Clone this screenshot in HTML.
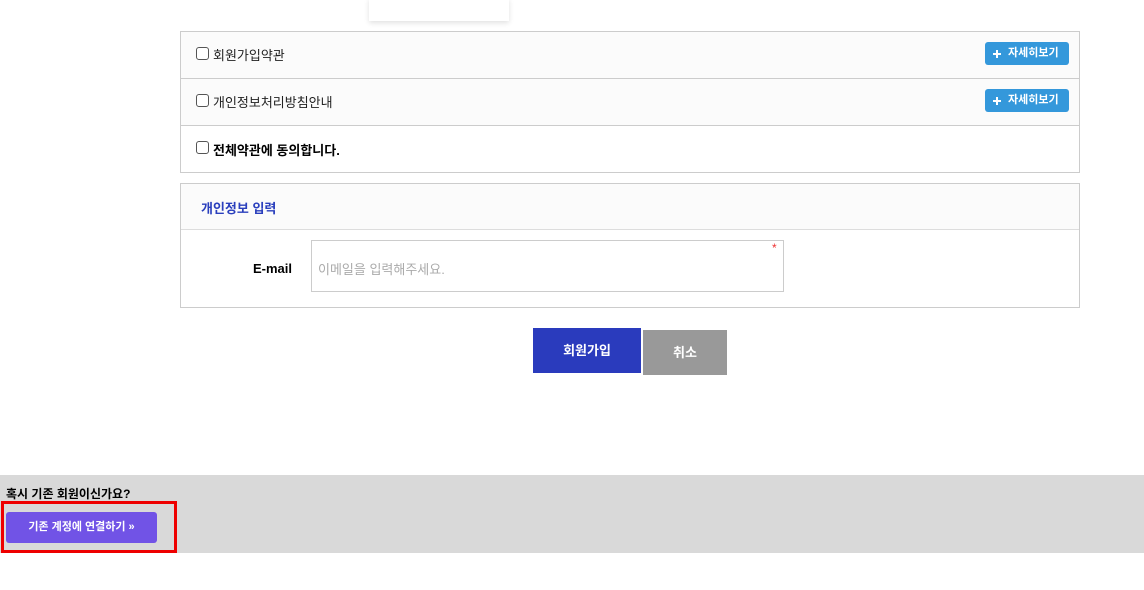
<!DOCTYPE html>
<html><head><meta charset="utf-8"><style>
*{box-sizing:border-box;margin:0;padding:0}
body{width:1144px;height:590px;background:#fff;font-family:"Liberation Sans","Noto Sans CJK KR",sans-serif;position:relative;overflow:hidden;color:#222}
.abs{position:absolute}
.cb{position:absolute;width:13px;height:13px;border:1px solid #555;border-radius:3px;background:#fff}
.btn{position:absolute;left:985px;width:84px;height:23px;background:#3498db;border-radius:3px;color:#fff;font-size:11px;font-weight:bold;line-height:22px;padding-left:23px}
.btn:before{content:"";position:absolute;left:8px;width:8px;height:2px;background:#fff;top:10.5px}
.btn:after{content:"";position:absolute;left:11px;top:7.5px;width:2px;height:8px;background:#fff}
</style></head><body>
<div class="abs" style="left:369px;top:-2px;width:140px;height:23px;background:#fff;box-shadow:0 2px 5px rgba(0,0,0,.12)"></div>
<div class="abs" style="left:180px;top:31px;width:900px;height:142px;border:1px solid #ccc">
 <div style="height:47px;background:#fbfbfb;border-bottom:1px solid #ccc"></div>
 <div style="height:47px;background:#fbfbfb;border-bottom:1px solid #ccc"></div>
</div>
<div class="cb" style="left:196px;top:47px"></div><div class="abs" style="left:213px;top:45px;font-size:13px">회원가입약관</div>
<div class="cb" style="left:196px;top:94px"></div><div class="abs" style="left:213px;top:92px;font-size:13px">개인정보처리방침안내</div>
<div class="cb" style="left:196px;top:141px"></div><div class="abs" style="left:213px;top:140px;font-size:13px;font-weight:bold;color:#000">전체약관에 동의합니다.</div>
<div class="btn" style="top:42px">자세히보기</div>
<div class="btn" style="top:89px">자세히보기</div>
<div class="abs" style="left:180px;top:183px;width:900px;height:125px;border:1px solid #ccc">
 <div style="height:46px;background:#fbfbfb;border-bottom:1px solid #ddd;padding:14px 0 0 20px;font-size:13px;font-weight:bold;color:#2a3fbd">개인정보 입력</div>
</div>
<div class="abs" style="left:253px;top:261px;font-size:13px;font-weight:bold;color:#000">E-mail</div>
<div class="abs" style="left:311px;top:240px;width:473px;height:52px;border:1px solid #ccc;padding:18px 0 0 6px;font-size:13px;color:#aaa">이메일을 입력해주세요.</div>
<div class="abs" style="left:772px;top:241px;color:#e33;font-size:12px">*</div>
<div class="abs" style="left:533px;top:328px;width:108px;height:45px;background:#2a3bbd;color:#fff;font-weight:bold;font-size:13px;text-align:center;line-height:45px">회원가입</div>
<div class="abs" style="left:643px;top:330px;width:84px;height:45px;background:#999;color:#fff;font-weight:bold;font-size:13px;text-align:center;line-height:45px">취소</div>
<div class="abs" style="left:0;top:475px;width:1144px;height:78px;background:#d9d9d9"></div>
<div class="abs" style="left:6px;top:485px;font-size:12px;font-weight:bold;color:#000">혹시 기존 회원이신가요?</div>
<div class="abs" style="left:6px;top:512px;width:151px;height:31px;background:#7153e6;border-radius:3px;color:#fff;font-size:11px;font-weight:bold;text-align:center;line-height:31px">기존 계정에 연결하기 »</div>
<div class="abs" style="left:1px;top:501px;width:176px;height:52px;border:3px solid #e00"></div>
</body></html>
